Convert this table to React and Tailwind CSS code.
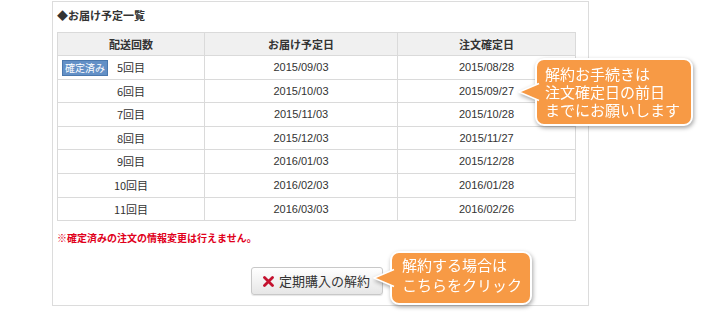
import React from 'react';

const JP = "font-['Noto_Sans_CJK_JP','Noto_Sans',sans-serif]";

// delivery schedule rows
const ROWS = [
    { no: 5, delivery: '2015/09/03', confirm: '2015/08/28', fixed: true },
    { no: 6, delivery: '2015/10/03', confirm: '2015/09/27' },
    { no: 7, delivery: '2015/11/03', confirm: '2015/10/28' },
    { no: 8, delivery: '2015/12/03', confirm: '2015/11/27' },
    { no: 9, delivery: '2016/01/03', confirm: '2015/12/28' },
    { no: 10, delivery: '2016/02/03', confirm: '2016/01/28' },
    { no: 11, delivery: '2016/03/03', confirm: '2016/02/26' }
];

const Tip = () => (
  <svg width="22" height="24" viewBox="0 0 22 24" className="absolute left-[-19px] top-1/2 -translate-y-1/2">
    <polygon points="22,3 1,12 22,21" fill="#f79a45" />
    <polyline points="21,3.5 1,12 21,20.5" fill="none" stroke="#fff" strokeWidth="1.6" strokeLinejoin="round" />
  </svg>
);

const Callout = ({ className, children }) => (
  <div className={`absolute drop-shadow-[1px_2px_2px_rgba(0,0,0,0.35)] ${className}`}>
    <div className="relative h-full w-full rounded-[9px] border-2 border-white bg-[#f79a45] text-white text-[15px] leading-[18px]">
      <Tip />
      <div className="relative">{children}</div>
    </div>
  </div>
);

const App = () => {
    return (
      <div className={`relative w-[705px] h-[312px] bg-white text-[#333] ${JP}`}>
        <div className="ml-[52px] pt-px">
          <div className="w-[537px] h-[305px] border border-[#dcdcdc] pl-[4px] pr-[12px]">
            <h2 className="mt-[4px] h-[18px] text-[11px] font-bold leading-[18px]">◆お届け予定一覧</h2>

            <table className="mt-[8px] w-[519px] table-fixed border-collapse text-[11px]">
              <thead>
                <tr className="h-[23px] bg-[#f0f0f0]">
                  <th className="w-[147px] border border-[#dadada] font-bold">配送回数</th>
                  <th className="w-[193px] border border-[#dadada] font-bold">お届け予定日</th>
                  <th className="border border-[#dadada] font-bold">注文確定日</th>
                </tr>
              </thead>
              <tbody>
                {ROWS.map((row) => (
                  <tr key={row.no} className="h-[23.6px]">
                    <td className="relative border border-[#dadada] text-center">
                      {row.fixed && (
                        <span className="absolute left-[4px] top-[4px] h-[16px] w-[46px] border border-[#4a78ad] bg-[#6390c6] text-[10px] leading-[14px] text-white">
                          確定済み
                        </span>
                      )}
                      {row.no}回目
                    </td>
                    <td className="border border-[#dadada] text-center font-['Liberation_Sans',sans-serif]">{row.delivery}</td>
                    <td className="border border-[#dadada] text-center font-['Liberation_Sans',sans-serif]">{row.confirm}</td>
                  </tr>
                ))}
              </tbody>
            </table>

            <p className="mt-[10px] text-[10px] font-bold leading-[14px] text-[#e0001b]">※確定済みの注文の情報変更は行えません。</p>

            <div className="mt-[22px] flex justify-center">
              <button className="flex h-[28px] w-[132px] items-center justify-center gap-[5px] rounded-[3px] border border-[#c8c8c8] bg-gradient-to-b from-white to-[#e6e6e6] text-[13px] text-[#333] shadow-[0_1px_1px_rgba(0,0,0,0.1)]">
                <svg width="11" height="11" viewBox="0 0 11 11">
                  <path d="M1.5 1.5 L9.5 9.5 M9.5 1.5 L1.5 9.5" stroke="#c4122f" strokeWidth="2.8" strokeLinecap="round" />
                </svg>
                定期購入の解約
              </button>
            </div>
          </div>
        </div>

        <Callout className="left-[535px] top-[58px] w-[158px] h-[68px]">
          <div className="pl-[8px] pt-[5px]">
            <div>解約お手続きは</div>
            <div>注文確定日の前日</div>
            <div>までにお願いします</div>
          </div>
        </Callout>

        <Callout className="left-[390px] top-[251px] w-[142px] h-[54px]">
          <div className="pl-[10px] pt-[2px] leading-[20px]">
            <div>解約する場合は</div>
            <div>こちらをクリック</div>
          </div>
        </Callout>
      </div>
    );
};

export default App;
